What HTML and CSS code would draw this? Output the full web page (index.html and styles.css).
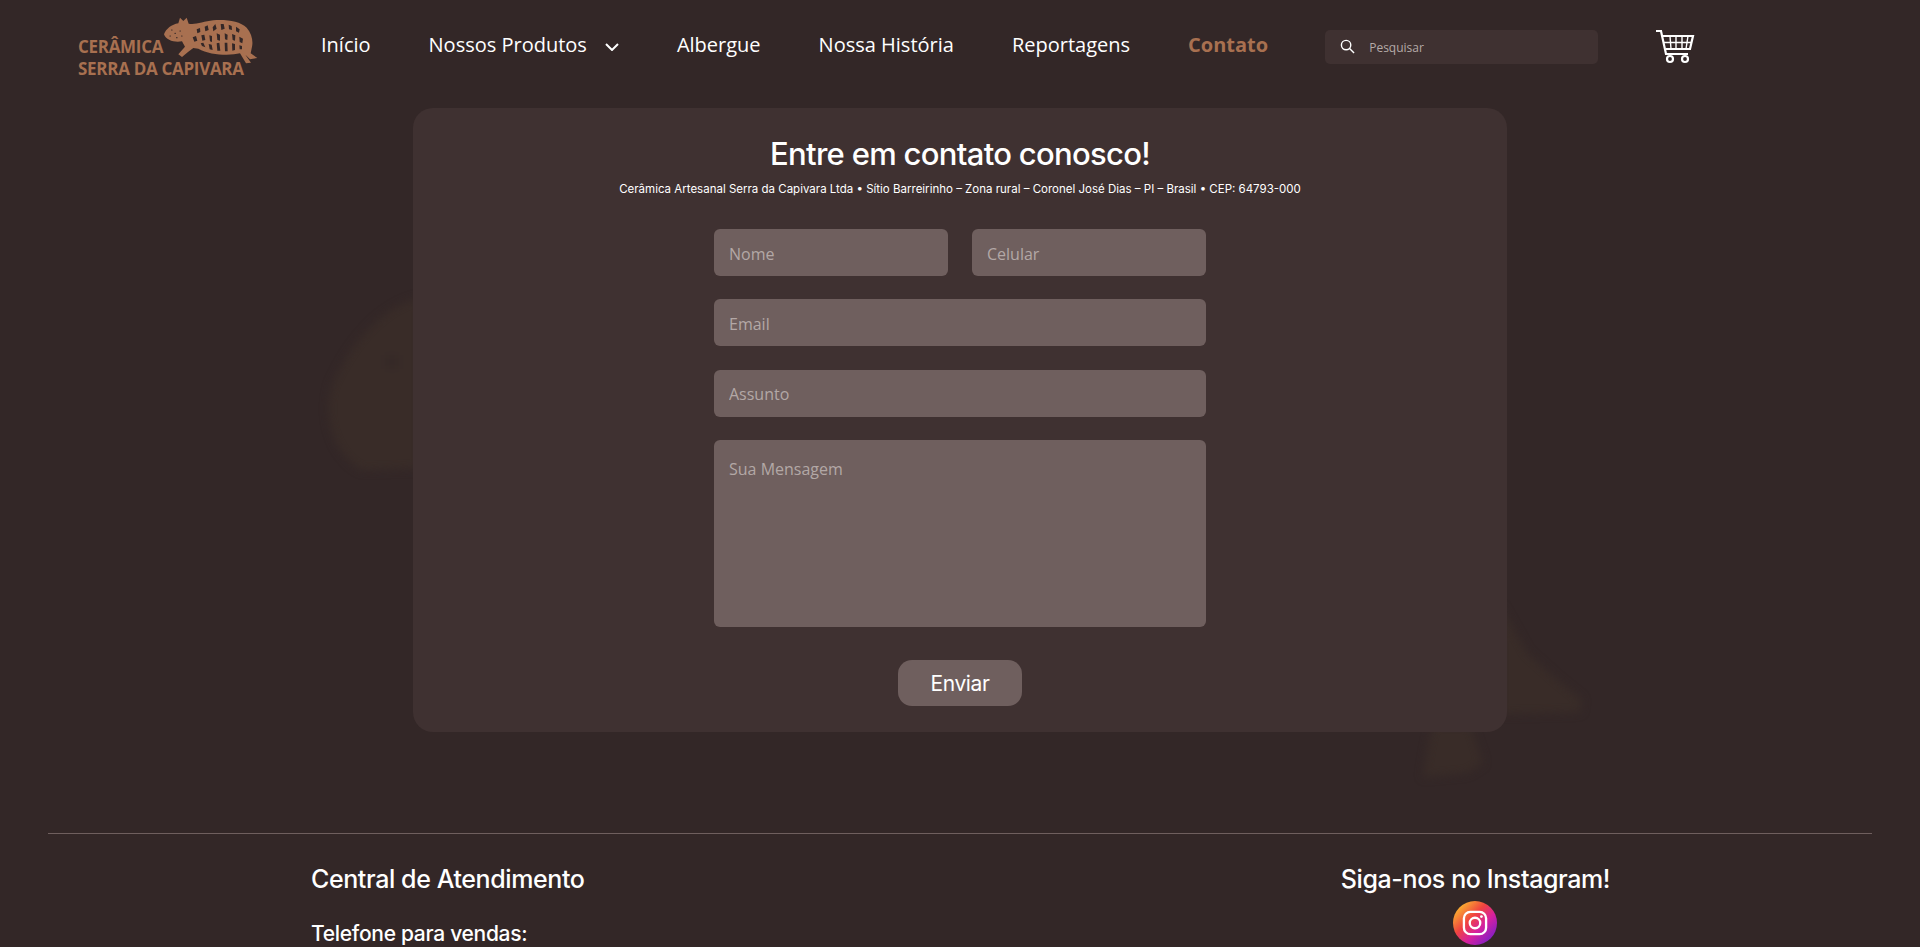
FILE: index.html
```html
<!DOCTYPE html>
<html>
<head>
    <title>Contato - Cerâmica Serra da Capivara</title>
    <link rel="stylesheet" href="styles.css">
</head>
<body>
    <!-- marca d'agua -->
    <svg class="watermark" viewBox="0 0 1920 947">
        <path d="M420 298C385 305 352 340 332 385C322 420 335 455 362 470L420 468Z"/>
        <path d="M1500 605L1527 653L1557 680L1582 700L1580 712L1500 714Z"/>
        <path d="M1433 725L1470 725L1483 763L1467 773L1423 777L1428 747Z"/>
        <rect class="eye" x="385" y="355" width="14" height="14"/>
    </svg>

    <header class="topbar">
        <a class="logo" href="#">
            <svg class="logo-capy" viewBox="300 20 300 150">
                <path d="M312 75C318 58 335 46 355 42L360 25L370 35L380 25L386 43C405 48 430 36 460 33C500 30 540 36 560 55C575 72 580 95 576 112L572 132L592 146L570 150L556 136L573 160L558 162L540 132C510 140 450 138 415 118L400 116L384 128L366 143L355 135L375 112L366 96C345 100 318 94 312 75Z"/>
                <g class="logo-marks">
                    <path d="M410 60L420 56L421 68L412 72ZM434 52L443 48L446 62L436 66ZM458 54L466 44L470 58L460 66ZM482 44L491 44L494 58L484 62ZM506 46L515 50L516 62L507 60ZM528 52L539 60L537 70L528 66Z"/>
                    <path d="M398 84L408 80L412 94L403 97ZM424 78L433 76L436 92L427 94ZM448 78L456 80L456 98L450 96ZM470 72L480 76L480 94L472 92ZM494 72L503 76L502 92L495 90ZM516 74L526 78L525 94L518 92ZM538 82L549 88L547 102L539 98Z"/>
                    <path d="M422 102L430 100L436 114L426 110ZM446 104L455 106L458 122L449 120ZM470 102L478 100L481 124L472 124ZM494 100L502 100L503 126L495 126ZM516 102L525 104L525 122L517 124ZM538 108L546 110L546 120L539 120Z"/>
                    <path class="logo-spots" d="M335 62h1M345 72h1M330 80h1M350 85h1M360 65h1M365 80h1"/>
                </g>
            </svg>
            <span class="logo-text">CERÂMICA<br>SERRA DA CAPIVARA</span>
        </a>
        <nav class="menu">
            <a href="#">Início</a>
            <a href="#" class="has-sub">Nossos Produtos
                <svg class="chevron" viewBox="0 0 14 8"><path d="M1 1l6 6 6-6"/></svg>
            </a>
            <a href="#">Albergue</a>
            <a href="#">Nossa História</a>
            <a href="#">Reportagens</a>
            <a href="#" class="active">Contato</a>
        </nav>
        <div class="search">
            <svg class="search-icon" viewBox="0 0 16 16"><circle cx="6.5" cy="6.5" r="5"/><path d="M10.2 10.2L15 15"/></svg>
            <input type="text" placeholder="Pesquisar">
        </div>
        <a class="cart" href="#">
            <svg viewBox="0 0 40 36">
                <path class="cart-line" d="M1 2h5l5 23h22"/>
                <path class="cart-line" d="M8 7h30l-3 13H11"/>
                <path class="cart-thin" d="M15 7l1 13M21 7v13M27 7v13M33 7l-2 13M9 13.500h28"/>
                <circle class="cart-line" cx="15" cy="30" r="3"/>
                <circle class="cart-line" cx="30" cy="30" r="3"/>
            </svg>
        </a>
    </header>

    <main class="content">
        <section class="card">
            <h1>Entre em contato conosco!</h1>
            <p class="address">Cerâmica Artesanal Serra da Capivara Ltda • Sítio Barreirinho – Zona rural – Coronel José Dias – PI – Brasil • CEP: 64793-000</p>
            <form class="form">
                <div class="form-row">
                    <input type="text" placeholder="Nome">
                    <input type="text" placeholder="Celular">
                </div>
                <input type="text" placeholder="Email">
                <input type="text" placeholder="Assunto">
                <textarea placeholder="Sua Mensagem"></textarea>
                <button type="button">Enviar</button>
            </form>
        </section>
    </main>

    <footer class="footer">
        <div class="footer-cols">
            <div class="col-contact">
                <h2>Central de Atendimento</h2>
                <h3>Telefone para vendas:</h3>
            </div>
            <div class="col-social">
                <h2>Siga-nos no Instagram!</h2>
                <a class="insta" href="#">
                    <svg viewBox="0 0 24 24">
                        <rect x="2.500" y="2.500" width="19" height="19" rx="5.500"/>
                        <circle cx="12" cy="12" r="4.500"/>
                        <circle class="insta-dot" cx="17.500" cy="6.500" r="1.200"/>
                    </svg>
                </a>
            </div>
        </div>
    </footer>
</body>
</html>
```

FILE: styles.css
```css
html, body {
    height: 947px;
    overflow: hidden;
}
body {
    margin: 0;
    position: relative;
    background-color: #332727;
    color: #fff;
    font-family: Inter, sans-serif;
}
a {
    color: inherit;
    text-decoration: none;
}
.watermark {
    position: absolute;
    left: 0;
    top: 0;
    width: 1920px;
    height: 947px;
    fill: #392c28;
    filter: blur(4px);
}
.watermark .eye {
    fill: #352927;
}

/* topo */
.topbar {
    position: relative;
    display: flex;
    align-items: center;
    height: 108px;
    padding: 0 0 19px 78px;
    box-sizing: border-box;
}
.logo {
    position: relative;
    display: block;
    width: 180px;
    height: 62px;
    margin: 4px 63px 0 0;
    color: #a87050;
}
.logo-capy {
    position: absolute;
    left: 82px;
    top: 0;
    width: 100px;
    height: 50px;
    fill: #a87050;
}
.logo-marks {
    fill: #332727;
}
.logo-spots {
    fill: none;
    stroke: #332727;
    stroke-width: 3.500;
    stroke-linecap: round;
}
.logo-text {
    display: block;
    padding-top: 20px;
    font-family: "Open Sans", sans-serif;
    font-size: 17px;
    font-weight: 700;
    line-height: 22px;
    letter-spacing: -0.3px;
    white-space: nowrap;
}
.menu {
    display: flex;
    align-items: center;
    gap: 58px;
    font-family: "Open Sans", sans-serif;
    font-size: 20px;
}
.has-sub {
    display: flex;
    align-items: center;
    gap: 18px;
}
.chevron {
    width: 14px;
    height: 8px;
    margin-top: 4px;
    fill: none;
    stroke: #fff;
    stroke-width: 2;
}
.menu .active {
    color: #a87050;
    font-weight: 700;
}
.search {
    display: flex;
    align-items: center;
    gap: 14px;
    width: 273px;
    height: 34px;
    margin: 4px 0 0 57px;
    padding-left: 15px;
    box-sizing: border-box;
    background-color: #3f3131;
    border-radius: 5px;
}
.search-icon {
    width: 15px;
    height: 15px;
    flex: none;
    fill: none;
    stroke: #fff;
    stroke-width: 1.500;
}
.search input {
    width: 180px;
    padding: 2px 0 0;
    border: none;
    outline: none;
    background: none;
    color: #fff;
    font-family: "Open Sans", sans-serif;
    font-size: 12px;
}
.search input::placeholder {
    color: #b5aaa8;
}
.cart {
    display: block;
    width: 40px;
    height: 36px;
    margin: 4px 0 0 57px;
}
.cart-line {
    fill: none;
    stroke: #fff;
    stroke-width: 2.200;
}
.cart-thin {
    fill: none;
    stroke: #fff;
    stroke-width: 1.400;
}

/* formulario */
.content {
    position: relative;
    display: flex;
    justify-content: center;
}
.card {
    width: 1094px;
    height: 624px;
    box-sizing: border-box;
    padding-top: 26px;
    background-color: #3f3131;
    border-radius: 20px;
    text-align: center;
}
.card h1 {
    margin: 0;
    font-size: 31px;
    font-weight: 500;
    line-height: 40px;
    letter-spacing: -0.7px;
}
.address {
    margin: 7px 0 0;
    font-size: 11.500px;
    line-height: 16px;
}
.form {
    display: flex;
    flex-direction: column;
    gap: 23.300px;
    width: 492px;
    margin: 32px auto 0;
}
.form-row {
    display: flex;
    gap: 24px;
}
.form-row input {
    flex: 1;
    width: 0;
}
.form input, .form textarea {
    height: 47px;
    padding: 2px 15px 0;
    box-sizing: border-box;
    border: none;
    border-radius: 6px;
    outline: none;
    background-color: #6f5f5e;
    color: #fff;
    font-family: "Open Sans", sans-serif;
    font-size: 16px;
}
.form textarea {
    height: 187px;
    padding-top: 18px;
    resize: none;
}
.form input::placeholder, .form textarea::placeholder {
    color: #b3a8a6;
}
.form button {
    align-self: center;
    width: 124px;
    height: 46px;
    margin-top: 10px;
    border: none;
    border-radius: 14px;
    background-color: #6f5f5e;
    color: #fff;
    font-family: Inter, sans-serif;
    font-size: 21px;
    letter-spacing: -0.4px;
    cursor: pointer;
}

/* rodape */
.footer {
    position: relative;
    margin: 101px 48px 0;
    border-top: 1px solid #6f5f5e;
}
.footer-cols {
    display: flex;
    justify-content: space-between;
    padding: 28px 262px 0 263px;
}
.footer h2 {
    margin: 0;
    font-size: 25px;
    font-weight: 500;
    line-height: 34px;
    letter-spacing: -0.4px;
}
.footer h3 {
    margin: 23px 0 0;
    font-size: 21px;
    font-weight: 500;
    line-height: 30px;
    letter-spacing: -0.3px;
}
.col-social {
    display: flex;
    flex-direction: column;
    align-items: center;
    gap: 5px;
}
.insta {
    display: flex;
    align-items: center;
    justify-content: center;
    width: 44px;
    height: 44px;
    border-radius: 50%;
    background: linear-gradient(135deg, #fcc52d 8%, #f0443f 40%, #d520a0 62%, #7a1fc9 90%);
}
.insta svg {
    width: 28px;
    height: 28px;
    fill: none;
    stroke: #fff;
    stroke-width: 2;
}
.insta .insta-dot {
    fill: #fff;
    stroke: none;
}
```
